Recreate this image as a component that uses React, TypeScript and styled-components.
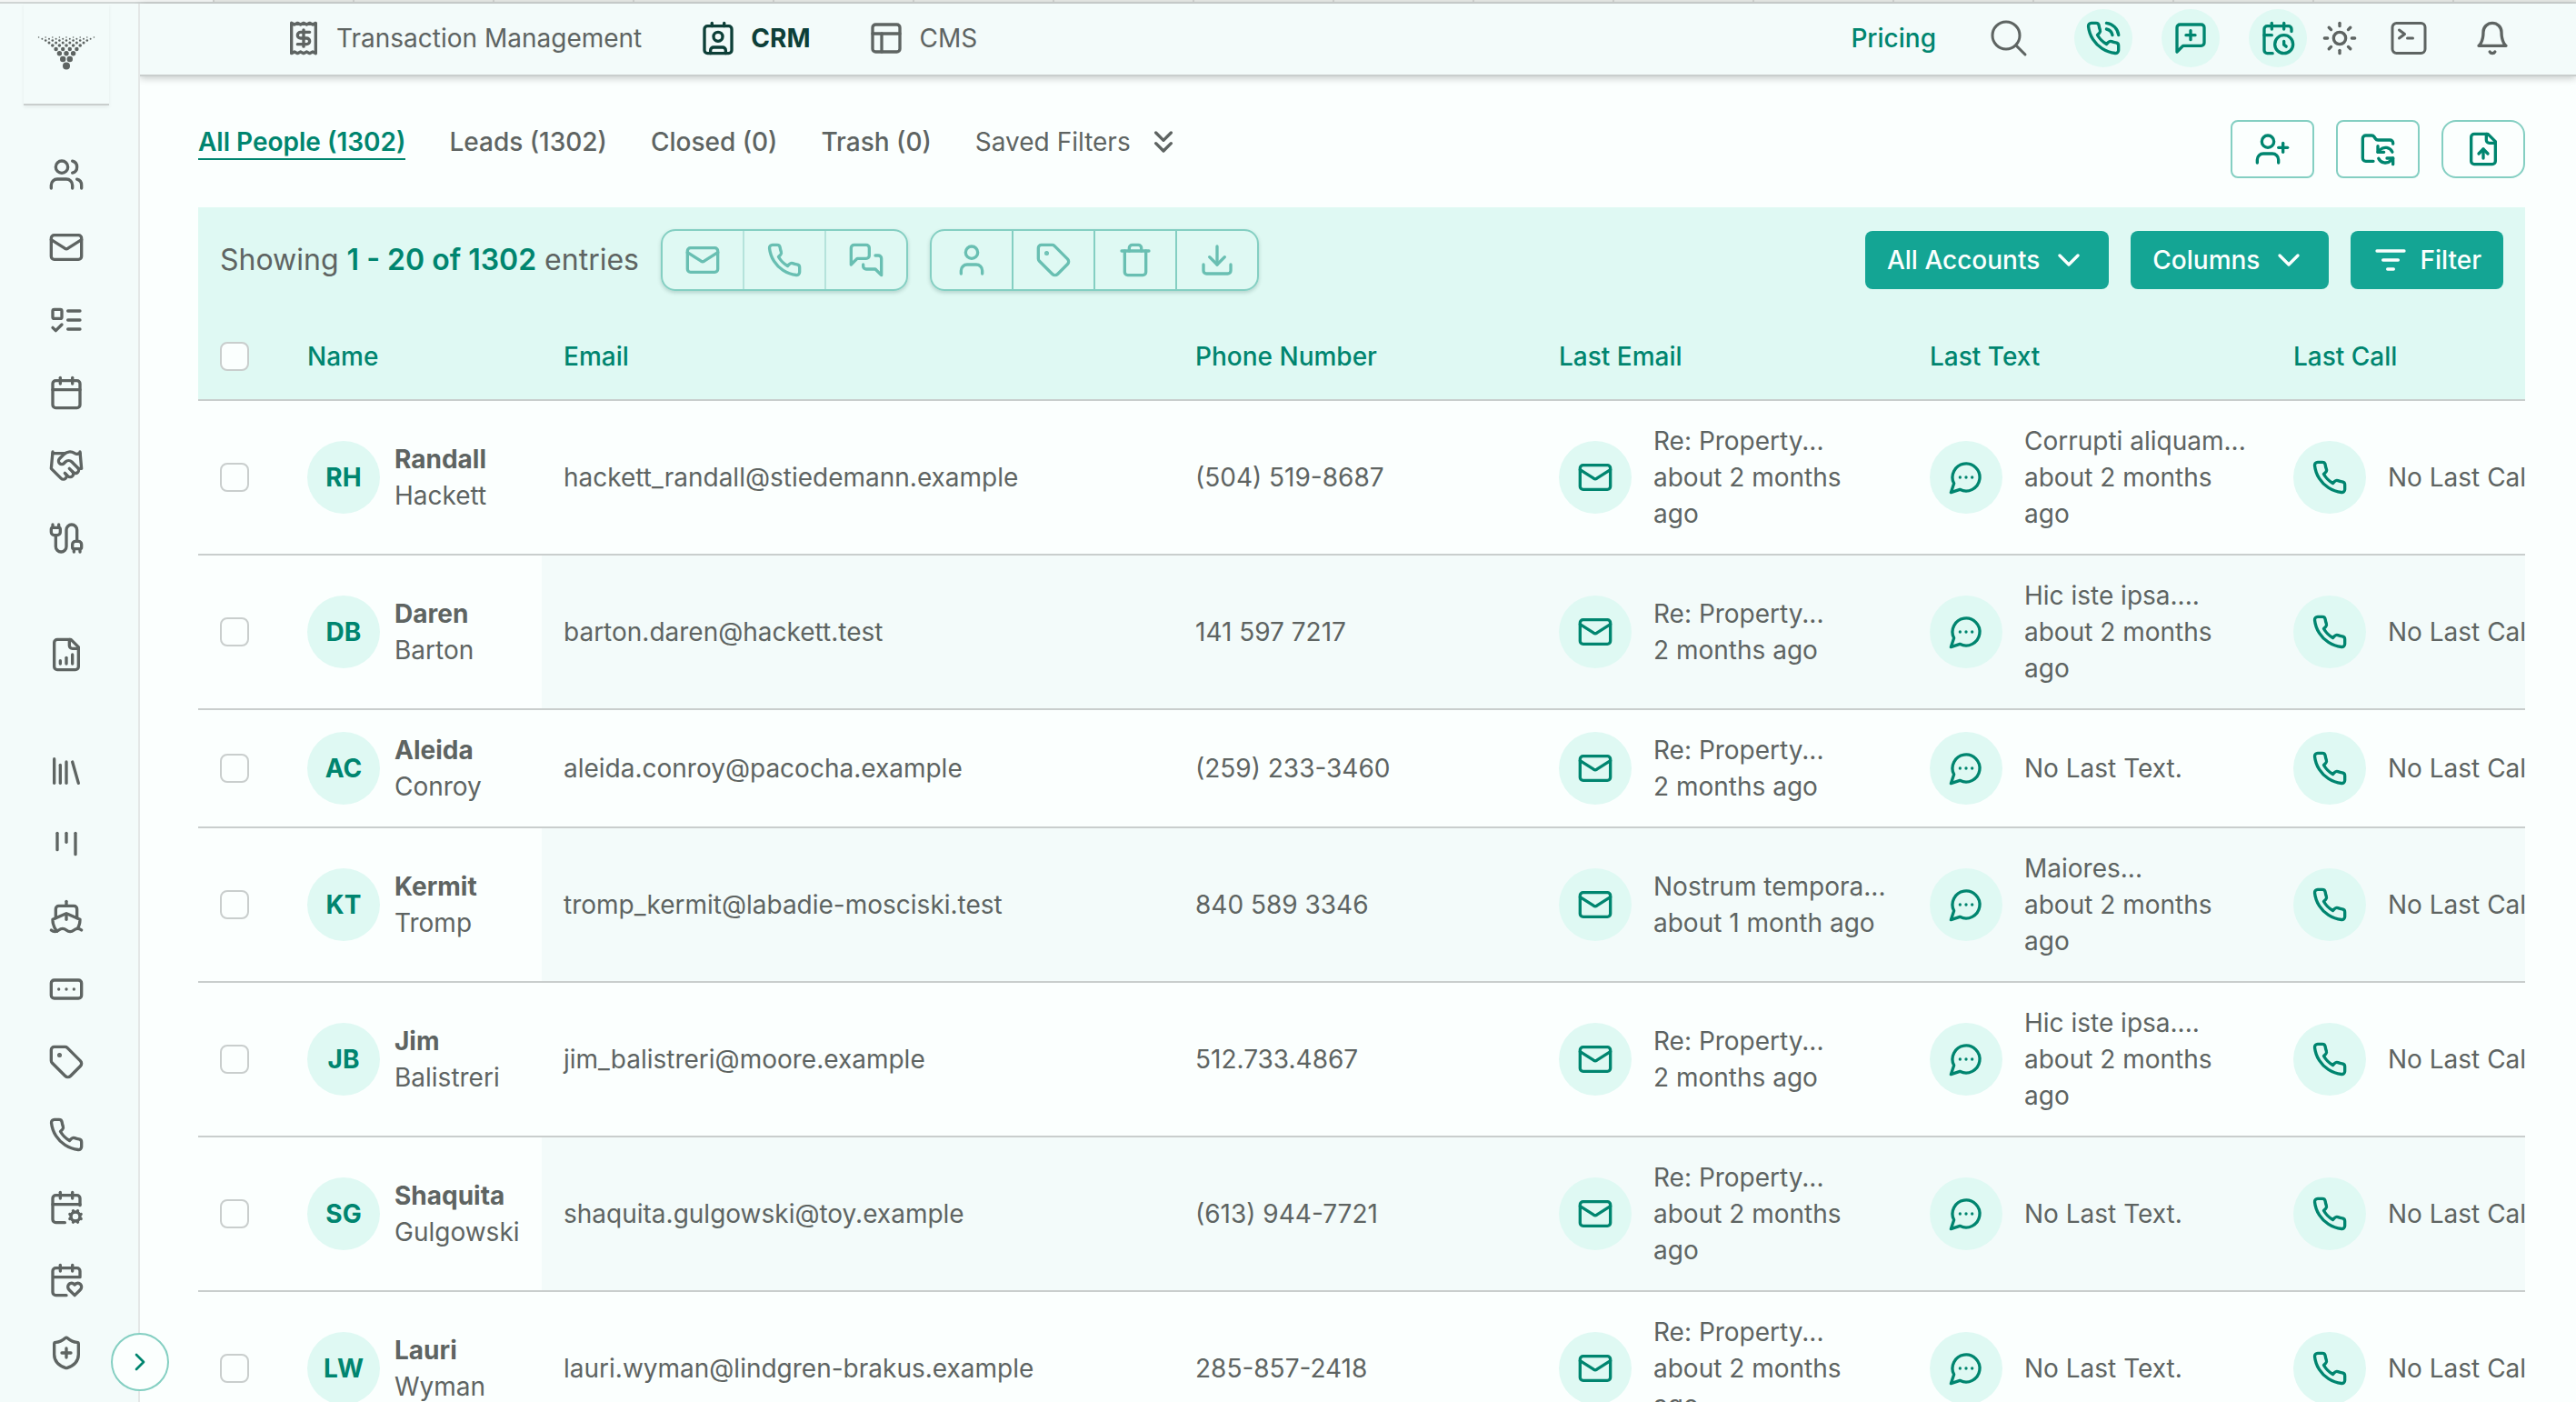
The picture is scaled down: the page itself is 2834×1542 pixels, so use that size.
import React from 'react';
import styled, { createGlobalStyle, css } from 'styled-components';
import {
  Users, Mail, Calendar, Handshake, Cable, Library, Ship, RectangleEllipsis, Tag,
  CalendarCog, ShieldPlus, ChevronRight, Contact, PanelsTopLeft,
  Sun, UserPlus, FolderSync, ChevronDown, ChevronsDown, User, Download,
} from 'lucide-react';

const GlobalStyle = createGlobalStyle`
  *, *::before, *::after { box-sizing: border-box; }
  body { margin: 0; background: #fbfffe; color: #5e6462; font-family: Inter, "Liberation Sans", sans-serif; font-size: 28px; line-height: 40px; overflow: hidden; }
  button { font: inherit; padding: 0; margin: 0; border: 0; background: none; color: inherit; cursor: pointer; }
  a { color: inherit; text-decoration: none; }
  svg { display: block; flex: none; }
`;

const glyph = (paths: string[]) => ({ size = 40, strokeWidth = 2 }: { size?: number; strokeWidth?: number }) => (
  <svg width={size} height={size} viewBox="0 0 24 24" fill="none" stroke="currentColor" strokeWidth={strokeWidth} strokeLinecap="round" strokeLinejoin="round" aria-hidden="true">
    {paths.map((d) => <path key={d} d={d} />)}
  </svg>
);
const SHEET = 'M15 2H6a2 2 0 0 0-2 2v16a2 2 0 0 0 2 2h12a2 2 0 0 0 2-2V7Z';
const FOLD = 'M14 2v4a2 2 0 0 0 2 2h4';
const HANDSET = 'M22 16.92v3a2 2 0 0 1-2.18 2 19.79 19.79 0 0 1-8.63-3.07 19.5 19.5 0 0 1-6-6 19.79 19.79 0 0 1-3.07-8.67A2 2 0 0 1 4.11 2h3a2 2 0 0 1 2 1.72 12.84 12.84 0 0 0 .7 2.81 2 2 0 0 1-.45 2.11L8.09 9.91a16 16 0 0 0 6 6l1.27-1.27a2 2 0 0 1 2.11-.45 12.84 12.84 0 0 0 2.81.7A2 2 0 0 1 22 16.92z';
const Phone = glyph([HANDSET]);
const PhoneCall = glyph([HANDSET, 'M14.05 2a9 9 0 0 1 8 7.94', 'M14.05 6A5 5 0 0 1 18 10']);
const Bell = glyph(['M6 8a6 6 0 0 1 12 0c0 7 3 9 3 9H3s3-2 3-9', 'M10.3 21a1.94 1.94 0 0 0 3.4 0']);
const ListTodo = glyph(['M4 5h4a1 1 0 0 1 1 1v4a1 1 0 0 1-1 1H4a1 1 0 0 1-1-1V6a1 1 0 0 1 1-1Z', 'm3 17 2 2 4-4', 'M13 6h8', 'M13 12h8', 'M13 18h8']);
const CalendarHeart = glyph([
  'M3 10h18V6a2 2 0 0 0-2-2H5a2 2 0 0 0-2 2v14c0 1.1.9 2 2 2h7', 'M8 2v4', 'M16 2v4',
  'M21.29 14.7a2.43 2.43 0 0 0-2.65-.52c-.3.12-.57.3-.8.53l-.34.34-.35-.34a2.43 2.43 0 0 0-2.65-.53c-.3.12-.56.3-.79.53-.95.94-1 2.53.2 3.74L17.5 22l3.6-3.55c1.2-1.21 1.14-2.8.19-3.74Z',
]);
const CalendarClock = glyph([
  'M21 7.5V6a2 2 0 0 0-2-2H5a2 2 0 0 0-2 2v14a2 2 0 0 0 2 2h3.5', 'M16 2v4', 'M8 2v4', 'M3 10h5',
  'M17.5 17.5 16 16.3V14', 'M22 16a6 6 0 1 1-12 0a6 6 0 0 1 12 0Z',
]);
const FileChart = glyph([SHEET, FOLD, 'M8 18v-2', 'M12 18v-4', 'M16 18v-6']);
const FileUp = glyph([SHEET, FOLD, 'M12 12v6', 'm15 15-3-3-3 3']);
const Board = glyph(['M6 5v11', 'M12 5v6', 'M18 5v14']);
const Receipt = glyph(['M4 2v20l2-1 2 1 2-1 2 1 2-1 2 1 2-1 2 1V2l-2 1-2-1-2 1-2-1-2 1-2-1-2 1Z', 'M16 8h-6a2 2 0 1 0 0 4h4a2 2 0 1 1 0 4H8', 'M12 17.5v-11']);
const MessagePlus = glyph(['M21 15a2 2 0 0 1-2 2H7l-4 4V5a2 2 0 0 1 2-2h14a2 2 0 0 1 2 2z', 'M12 7v6', 'M9 10h6']);
const Messages = glyph(['M14 9a2 2 0 0 1-2 2H6l-4 4V4a2 2 0 0 1 2-2h8a2 2 0 0 1 2 2z', 'M18 9h2a2 2 0 0 1 2 2v11l-4-4h-6a2 2 0 0 1-2-2v-1']);
const Terminal = glyph(['m6.75 7.5 3 2.25-3 2.25m4.5 0h3m-9 8.25h13.5A2.25 2.25 0 0 0 21 18V6a2.25 2.25 0 0 0-2.25-2.25H5.25A2.25 2.25 0 0 0 3 6v12a2.25 2.25 0 0 0 2.25 2.25Z']);
const Search = glyph(['m21 21-5.197-5.197m0 0A7.5 7.5 0 1 0 5.196 5.196a7.5 7.5 0 0 0 10.607 10.607Z']);
const Trash = glyph(['M3 6h18', 'M19 6v14a2 2 0 0 1-2 2H7a2 2 0 0 1-2-2V6', 'M8 6V4a2 2 0 0 1 2-2h4a2 2 0 0 1 2 2v2']);
const FilterLines = glyph(['M3 6h18', 'M7 12h10', 'M10 18h4']);
const ChatDots = glyph(['M7.9 20A9 9 0 1 0 4 16.1L2 22Z', 'M8 12h.01', 'M12 12h.01', 'M16 12h.01']);

const BrowserEdge = styled.div`
  height: 4px;
  background: repeating-linear-gradient(90deg, #d0d2d0 0 2px, #e6e8e5 2px 154px) 234px 0 no-repeat, #f3f5f4;
  border-bottom: 2px solid #cfd4d3;
`;
const Shell = styled.div` display: flex; height: calc(100vh - 4px); `;
const Sidebar = styled.aside`
  position: relative;
  display: flex;
  flex-direction: column;
  align-items: center;
  flex: none;
  width: 154px;
  padding-right: 6px;
  background: #f3fbfa;
  border-right: 2px solid #e4e7e7;
`;
const Brand = styled.a`
  display: flex;
  justify-content: center;
  align-items: flex-start;
  width: 94px;
  height: 112px;
  padding-top: 36px;
  margin-bottom: 56px;
  border-bottom: 2px solid #c9cecd;
  box-shadow: 0 2px 4px rgba(0, 0, 0, 0.06);
`;
const SideGroup = styled.nav`
  display: flex;
  flex-direction: column;
  gap: 40px;
  & + & { margin-top: 88px; }
`;
const SideLink = styled.a` display: block; `;
const Expand = styled.button`
  position: absolute;
  right: -34px;
  bottom: 12px;
  z-index: 2;
  display: grid;
  place-items: center;
  width: 64px;
  height: 64px;
  border: 2px solid #84cfc2;
  border-radius: 50%;
  background: #fbfffe;
  color: #00856f;
`;

const Main = styled.div` display: flex; flex-direction: column; flex: 1; min-width: 0; `;
const Topbar = styled.header`
  display: flex;
  align-items: center;
  justify-content: space-between;
  flex: none;
  height: 80px;
  padding: 0 72px 2px 160px;
  background: #f3fbfa;
  border-bottom: 2px solid #c9cecd;
  box-shadow: 0 2px 8px rgba(0, 0, 0, 0.22);
`;
const Modules = styled.nav` display: flex; gap: 64px; `;
const ModuleLink = styled.a<{ $active?: boolean }>`
  display: flex;
  align-items: center;
  gap: 16px;
  ${(p) => p.$active && css` color: #0d3f38; font-weight: 700; `}
`;
const Tools = styled.div` display: flex; align-items: center; `;
const Pricing = styled.a` color: #00856f; font-weight: 500; margin-right: 56px; `;
const ToolButton = styled.button` display: grid; place-items: center; `;
const ToolGroup = styled.div<{ $gap: number; $left: number }>`
  display: flex;
  align-items: center;
  gap: ${(p) => p.$gap}px;
  margin-left: ${(p) => p.$left}px;
`;
const RoundTool = styled(ToolButton)`
  width: 64px;
  height: 64px;
  border-radius: 50%;
  background: #dff9f3;
  color: #00856f;
`;

const Content = styled.main` display: flex; flex-direction: column; flex: 1; min-height: 0; padding: 48px 56px 0 64px; overflow: hidden; `;
const TabsRow = styled.div` display: flex; justify-content: space-between; align-items: flex-start; margin-bottom: 32px; `;
const Tabs = styled.nav` display: flex; align-items: flex-start; gap: 48px; padding-top: 6px; font-weight: 500; line-height: 36px; `;
const Tab = styled.a<{ $active?: boolean }>`
  border-bottom: 2px solid transparent;
  ${(p) => p.$active && css` color: #00856f; font-weight: 600; border-color: #00856f; `}
`;
const SavedFilters = styled.button` display: flex; align-items: center; gap: 16px; height: 36px; font-weight: 400; `;
const PageActions = styled.div` display: flex; gap: 24px; `;
const PageAction = styled.button<{ $round?: boolean }>`
  display: grid;
  place-items: center;
  width: 92px;
  height: 64px;
  border: 2px solid #84cfc2;
  border-radius: ${(p) => (p.$round ? 16 : 8)}px;
  color: #00856f;
`;

const Panel = styled.section` display: flex; flex-direction: column; min-height: 0; `;
const Toolbar = styled.div`
  display: flex;
  align-items: center;
  justify-content: space-between;
  flex: none;
  height: 116px;
  padding: 0 24px;
  background: #dff9f3;
`;
const ToolbarSide = styled.div` display: flex; align-items: center; gap: 24px; `;
const Showing = styled.p` margin: 0; font-size: 32px; strong { color: #00856f; font-weight: 600; } `;
const ButtonGroup = styled.div<{ $soft?: boolean }>`
  display: flex;
  height: 68px;
  border: 2px solid #84cfc2;
  border-radius: 16px;
  color: #69bfb2;
  box-shadow: 0 2px 4px rgba(0, 60, 50, 0.2);
  button { display: grid; place-items: center; width: 88px; }
  button:not(:last-child) { width: 90px; border-right: 2px solid ${(p) => (p.$soft ? '#b5e3db' : '#84cfc2')}; }
`;
const SolidButton = styled.button`
  display: flex;
  align-items: center;
  gap: 12px;
  height: 64px;
  padding: 0 24px;
  border-radius: 8px;
  background: #14a594;
  color: #fbfffe;
  font-weight: 500;
`;

const TableWrap = styled.div` overflow: auto; scrollbar-width: none; `;
const Table = styled.table`
  width: 100%;
  min-width: 2620px;
  table-layout: fixed;
  border-collapse: separate;
  border-spacing: 0;
`;
const Col = styled.col<{ $w?: number }>` width: ${(p) => (p.$w ? `${p.$w}px` : 'auto')}; `;
const Head = styled.th`
  height: 97px;
  padding: 0 24px;
  text-align: left;
  font-weight: 500;
  color: #00856f;
  background: #dff9f3;
  border-bottom: 2px solid #c9cecd;
`;
const Row = styled.tr` &:nth-child(even) td:nth-child(n + 3) { background: #f3fbfa; } `;
const Cell = styled.td` padding: 24px; border-bottom: 2px solid #c9cecd; vertical-align: middle; `;
const Check = styled.input.attrs({ type: 'checkbox' })`
  appearance: none;
  display: block;
  width: 32px;
  height: 32px;
  margin: 0;
  border: 2px solid #c9cecd;
  border-radius: 8px;
  background: #fbfffe;
`;
const Person = styled.div` display: flex; align-items: center; gap: 16px; white-space: nowrap; strong { display: block; font-weight: 700; } `;
const Disc = styled.div`
  display: grid;
  place-items: center;
  flex: none;
  width: 80px;
  height: 80px;
  border-radius: 50%;
  background: #dff9f3;
  color: #00856f;
  font-weight: 700;
`;
const Activity = styled.div` display: flex; align-items: center; gap: 24px; `;
const Note = styled.div` flex: 1; min-width: 0; span { display: block; white-space: nowrap; } `;

/* Inverted triangle of dots, each row one dot shorter and larger than the row above. */
const LOGO_ROWS = [
  { y: 1, r: 0.8 }, { y: 2.7, r: 1 }, { y: 4.5, r: 1.3 }, { y: 7, r: 1.5 }, { y: 10, r: 1.8 },
  { y: 14, r: 2.2 }, { y: 18.7, r: 2.7 }, { y: 25, r: 3.2 }, { y: 32.4, r: 4 },
];
function Logo() {
  return (
    <svg width="64" height="37" viewBox="0 0 64 37" fill="currentColor" aria-label="Home">
      {LOGO_ROWS.flatMap((row, n) => Array.from({ length: 9 - n }, (_, i) => (
        <circle key={`${n}-${i}`} cx={32 + (i - (8 - n) / 2) * 7.6} cy={row.y} r={row.r} />
      )))}
    </svg>
  );
}

const sideGroups = [
  [['People', Users], ['Mail', Mail], ['Tasks', ListTodo], ['Calendar', Calendar], ['Deals', Handshake], ['Integrations', Cable]],
  [['Reports', FileChart]],
  [['Library', Library], ['Board', Board], ['Campaigns', Ship], ['Messages', RectangleEllipsis], ['Tags', Tag], ['Calls', Phone],
    ['Calendar settings', CalendarCog], ['Favourites', CalendarHeart], ['Security', ShieldPlus]],
] as [string, React.ComponentType<{ size?: number }>][][];

type Contact = { first: string; last: string; email: string; phone: string; mail: [string, string]; text?: [string, string] };
const A2 = 'about 2 months ago';
const people: Contact[] = [
  { first: 'Randall', last: 'Hackett', email: 'hackett_randall@stiedemann.example', phone: '(504) 519-8687', mail: ['Re: Property...', A2], text: ['Corrupti aliquam...', A2] },
  { first: 'Daren', last: 'Barton', email: 'barton.daren@hackett.test', phone: '141 597 7217', mail: ['Re: Property...', '2 months ago'], text: ['Hic iste ipsa....', A2] },
  { first: 'Aleida', last: 'Conroy', email: 'aleida.conroy@pacocha.example', phone: '(259) 233-3460', mail: ['Re: Property...', '2 months ago'] },
  { first: 'Kermit', last: 'Tromp', email: 'tromp_kermit@labadie-mosciski.test', phone: '840 589 3346', mail: ['Nostrum tempora...', 'about 1 month ago'], text: ['Maiores...', A2] },
  { first: 'Jim', last: 'Balistreri', email: 'jim_balistreri@moore.example', phone: '512.733.4867', mail: ['Re: Property...', '2 months ago'], text: ['Hic iste ipsa....', A2] },
  { first: 'Shaquita', last: 'Gulgowski', email: 'shaquita.gulgowski@toy.example', phone: '(613) 944-7721', mail: ['Re: Property...', A2] },
  { first: 'Lauri', last: 'Wyman', email: 'lauri.wyman@lindgren-brakus.example', phone: '285-857-2418', mail: ['Re: Property...', A2] },
];

export default function App() {
  return (
    <>
      <GlobalStyle />
      <BrowserEdge />
      <Shell>
        <Sidebar>
          <Brand href="#"><Logo /></Brand>
          {sideGroups.map((group, i) => (
            <SideGroup key={i}>
              {group.map(([label, Icon]) => <SideLink key={label} href="#" aria-label={label}><Icon size={40} /></SideLink>)}
            </SideGroup>
          ))}
          <Expand aria-label="Expand sidebar"><ChevronRight size={32} /></Expand>
        </Sidebar>
        <Main>
          <Topbar>
            <Modules>
              <ModuleLink href="#"><Receipt />Transaction Management</ModuleLink>
              <ModuleLink href="#" $active><Contact size={40} />CRM</ModuleLink>
              <ModuleLink href="#"><PanelsTopLeft size={40} />CMS</ModuleLink>
            </Modules>
            <Tools>
              <Pricing href="#">Pricing</Pricing>
              <ToolButton aria-label="Search"><Search size={48} strokeWidth={1.5} /></ToolButton>
              <ToolGroup $gap={32} $left={48}>
                <RoundTool aria-label="Call"><PhoneCall /></RoundTool>
                <RoundTool aria-label="New message"><MessagePlus /></RoundTool>
                <RoundTool aria-label="Schedule"><CalendarClock /></RoundTool>
              </ToolGroup>
              <ToolGroup $gap={32} $left={16}>
                <ToolButton aria-label="Theme"><Sun size={40} /></ToolButton>
                <ToolButton aria-label="Console"><Terminal size={48} strokeWidth={1.5} /></ToolButton>
              </ToolGroup>
              <ToolGroup $gap={32} $left={48}>
                <ToolButton aria-label="Notifications"><Bell /></ToolButton>
              </ToolGroup>
            </Tools>
          </Topbar>
          <Content>
            <TabsRow>
              <Tabs>
                <Tab href="#" $active>All People (1302)</Tab>
                <Tab href="#">Leads (1302)</Tab>
                <Tab href="#">Closed (0)</Tab>
                <Tab href="#">Trash (0)</Tab>
                <SavedFilters>Saved Filters <ChevronsDown size={40} /></SavedFilters>
              </Tabs>
              <PageActions>
                <PageAction aria-label="Add person"><UserPlus size={40} /></PageAction>
                <PageAction aria-label="Sync folder"><FolderSync size={40} /></PageAction>
                <PageAction aria-label="Upload file" $round><FileUp /></PageAction>
              </PageActions>
            </TabsRow>
            <Panel>
              <Toolbar>
                <ToolbarSide>
                  <Showing>Showing <strong>1 - 20 of 1302</strong> entries</Showing>
                  <ButtonGroup $soft>
                    <button aria-label="Email"><Mail size={40} /></button>
                    <button aria-label="Call"><Phone /></button>
                    <button aria-label="Text"><Messages /></button>
                  </ButtonGroup>
                  <ButtonGroup>
                    <button aria-label="Assign"><User size={40} /></button>
                    <button aria-label="Tag"><Tag size={40} /></button>
                    <button aria-label="Delete"><Trash /></button>
                    <button aria-label="Download"><Download size={40} /></button>
                  </ButtonGroup>
                </ToolbarSide>
                <ToolbarSide>
                  <SolidButton>All Accounts <ChevronDown size={40} /></SolidButton>
                  <SolidButton>Columns <ChevronDown size={40} /></SolidButton>
                  <SolidButton><FilterLines />Filter</SolidButton>
                </ToolbarSide>
              </Toolbar>
              <TableWrap>
                <Table>
                  <colgroup><Col $w={96} /><Col $w={282} /><Col /><Col $w={400} /><Col $w={408} /><Col $w={400} /><Col $w={339} /></colgroup>
                  <thead>
                    <tr>
                      <Head><Check aria-label="Select all" /></Head>
                      <Head>Name</Head><Head>Email</Head><Head>Phone Number</Head><Head>Last Email</Head><Head>Last Text</Head><Head>Last Call</Head>
                    </tr>
                  </thead>
                  <tbody>
                    {people.map((p) => (
                      <Row key={p.email}>
                        <Cell><Check aria-label={`Select ${p.first} ${p.last}`} /></Cell>
                        <Cell><Person><Disc>{p.first[0]}{p.last[0]}</Disc><div><strong>{p.first}</strong>{p.last}</div></Person></Cell>
                        <Cell>{p.email}</Cell>
                        <Cell>{p.phone}</Cell>
                        <Cell><Activity><Disc><Mail size={40} /></Disc><Note><span>{p.mail[0]}</span>{p.mail[1]}</Note></Activity></Cell>
                        <Cell><Activity><Disc><ChatDots /></Disc><Note>{p.text ? <><span>{p.text[0]}</span>{p.text[1]}</> : 'No Last Text.'}</Note></Activity></Cell>
                        <Cell><Activity><Disc><Phone /></Disc><Note>No Last Call.</Note></Activity></Cell>
                      </Row>
                    ))}
                  </tbody>
                </Table>
              </TableWrap>
            </Panel>
          </Content>
        </Main>
      </Shell>
    </>
  );
}
